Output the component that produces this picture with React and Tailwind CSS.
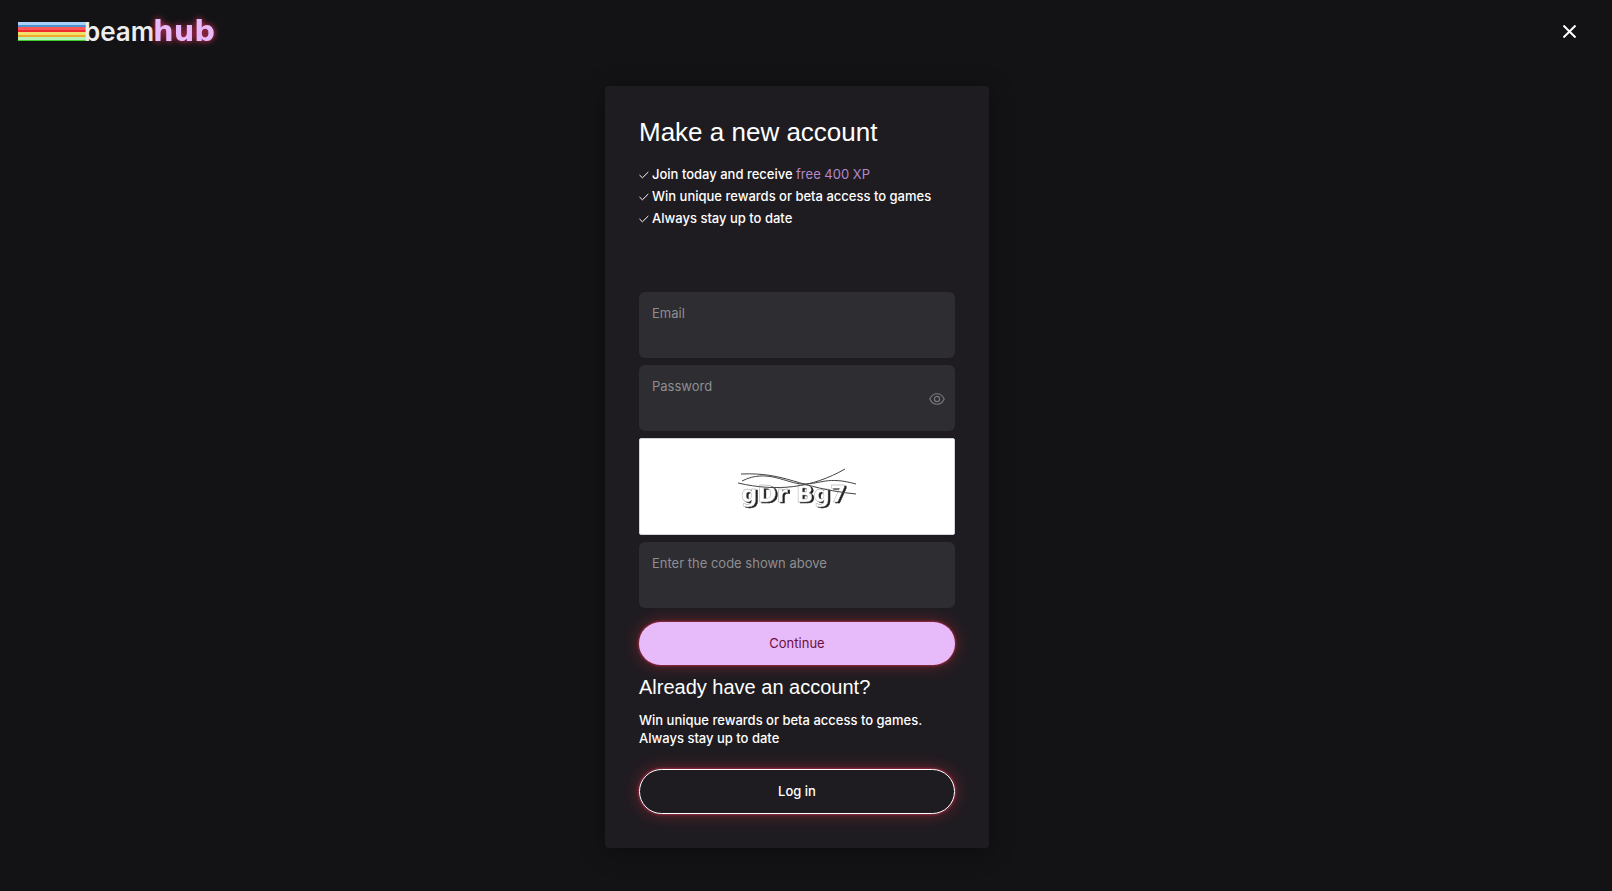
import React, { useState } from 'react';

const Logo = () => (
    <svg width="212" height="40" viewBox="0 0 212 40" role="img" aria-label="beamhub" className="overflow-visible">
        <g shapeRendering="crispEdges">
            <rect x="0" y="11" width="68" height="3" fill="#a9d1fb" />
            <rect x="0" y="14" width="68" height="2" fill="#4b93cb" />
            <rect x="0" y="16" width="68" height="3" fill="#ff5757" />
            <rect x="0" y="19" width="68" height="2" fill="#ef2b2b" />
            <rect x="0" y="21" width="68" height="3" fill="#f2e06a" />
            <rect x="0" y="24" width="68" height="2" fill="#f0a92c" />
            <rect x="0" y="26" width="68" height="3" fill="#b5f3b5" />
            <rect x="0" y="29" width="68" height="1" fill="#43cc2c" />
        </g>
        <text x="66" y="30" className="fill-[#eeeeee] font-['Inter'] text-[26px] font-semibold">beam</text>
        <text x="135" y="30" className="fill-[#e7bafa] font-['DejaVu_Sans'] text-[29px] font-bold drop-shadow-[0_0_3px_#e8335f]">hub</text>
    </svg>
);

const CloseIcon = () => (
    <svg width="13" height="13" viewBox="0 0 13 13" stroke="currentColor" strokeWidth="2" aria-hidden="true">
        <path d="M0.5 0.5 L12.5 12.5 M12.5 0.5 L0.5 12.5" />
    </svg>
);

const CheckIcon = () => (
    <svg width="10" height="10" viewBox="0 0 10 10" fill="none" stroke="currentColor" className="mt-0.5 shrink-0" aria-hidden="true">
        <path d="M0.5 5 L3.4 7.8 L9.3 2" />
    </svg>
);

const EyeIcon = () => (
    <svg width="16" height="12" viewBox="0 0 16 12" fill="none" stroke="currentColor" strokeWidth="1.2" aria-hidden="true">
        <path d="M0.8 6 C4 -1 12 -1 15.2 6 C12 13 4 13 0.8 6 Z" />
        <circle cx="8" cy="6" r="2.6" />
    </svg>
);

const Field = ({ id, label, type = 'text', children }) => (
    <div className="relative">
        <label htmlFor={id} className="absolute top-3 left-[13px] text-[13px] leading-[18px] text-[#8e8e91]">{label}</label>
        <input id={id} type={type} className="block h-[66px] w-full rounded-md bg-[#2e2d31] px-[13px] pt-7 pb-2 text-[13px] text-white outline-none" />
        {children}
    </div>
);

const Captcha = () => (
    <div className="flex h-[97px] items-center justify-center rounded-[2px] border border-[#cfd3dc] bg-white">
        <svg width="120" height="44" viewBox="0 -3 120 44" role="img" aria-label="Captcha code">
            <text x="4" y="34" stroke="#999" strokeWidth="0.4" className="fill-white font-['DejaVu_Sans'] text-[23px] font-bold drop-shadow-[2px_1px_0_#222]">gDr Bg7</text>
            <g fill="none" stroke="#444">
                <path d="M4 6 C50 4 60 20 119 26" />
                <path d="M1 15 C40 24 75 20 108 1" />
                <path d="M5 13 C30 0 50 16 66 16 C85 16 90 8 119 16" />
            </g>
        </svg>
    </div>
);

const App = () => {
    const [showPassword, setShowPassword] = useState(false);

    return (
        <div className="min-h-screen bg-[#131315] font-['Inter',sans-serif] text-white">
            <header className="flex h-[62px] items-center justify-between pr-8 pl-[18px]">
                <a href="#"><Logo /></a>
                <button type="button" aria-label="Close" className="p-1"><CloseIcon /></button>
            </header>

            <main className="pt-6 pr-[34px] pb-8 pl-4">
                <div className="mx-auto max-w-96 rounded bg-[#1f1c21] px-[34px] pt-7 pb-[34px] shadow-[0_4px_24px_rgba(0,0,0,0.35)]">
                    <h1 className="font-['Liberation_Sans',sans-serif] text-[26px] leading-9">Make a new account</h1>

                    <ul className="mt-[13px] mb-[63px] text-[13px] leading-[22px] font-medium">
                        <li className="flex items-center gap-[3px]"><CheckIcon /><span>Join today and receive <span className="font-normal text-[#b388c9]">free 400 XP</span></span></li>
                        <li className="flex items-center gap-[3px]"><CheckIcon />Win unique rewards or beta access to games</li>
                        <li className="flex items-center gap-[3px]"><CheckIcon />Always stay up to date</li>
                    </ul>

                    <form className="flex flex-col gap-[7px]" onSubmit={(e) => e.preventDefault()}>
                        <Field id="email" label="Email" type="email" />
                        <Field id="password" label="Password" type={showPassword ? 'text' : 'password'}>
                            <button type="button" aria-label="Show password" onClick={() => setShowPassword(!showPassword)} className="absolute top-7 right-[10px] text-[#77797f]">
                                <EyeIcon />
                            </button>
                        </Field>
                        <Captcha />
                        <Field id="code" label="Enter the code shown above" />
                        <button type="submit" className="mt-[7px] h-[43px] rounded-full bg-[#e7bafa] text-[13px] text-[#6d0f3c] shadow-[0_0_3px_#e8335f,0_0_16px_rgba(232,51,60,0.4)]">Continue</button>
                    </form>

                    <h2 className="mt-2 font-['Liberation_Sans',sans-serif] text-xl leading-7">Already have an account?</h2>
                    <p className="mt-[10px] mb-[22px] text-[13px] leading-[18px] font-medium">Win unique rewards or beta access to games.<br />Always stay up to date</p>
                    <button type="button" className="h-[45px] w-full rounded-full border border-white text-[13px] font-medium shadow-[0_0_3px_#e8335f,0_0_16px_rgba(232,51,60,0.4)]">Log in</button>
                </div>
            </main>
        </div>
    );
};

export default App;
